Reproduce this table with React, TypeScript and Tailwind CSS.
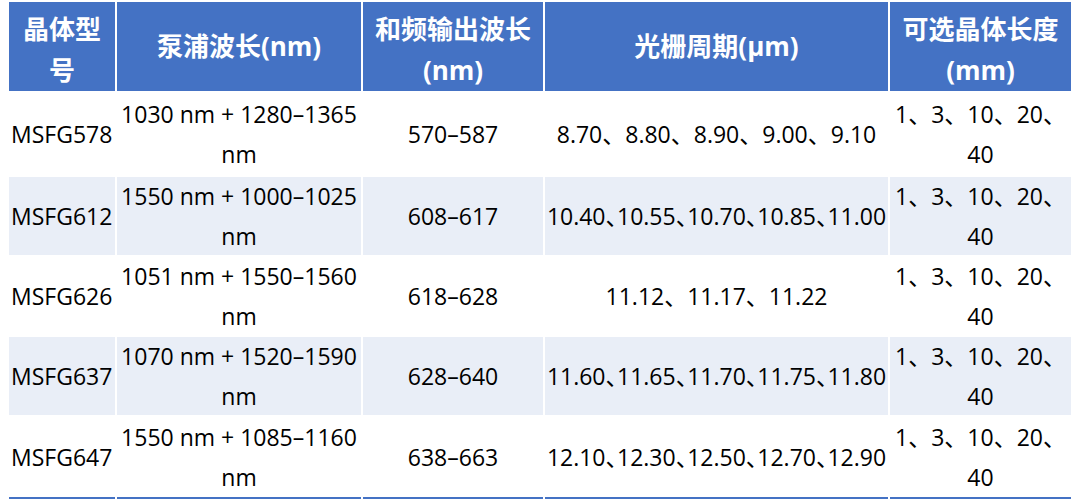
import React from "react";

type Row = {
	model: string;
	pump: string;
	output: string;
	period: string;
	tight: boolean;
	lengths: string;
};

const rows: Row[] = [
	{ model: "MSFG578", pump: "1030 nm + 1280–1365 nm", output: "570–587", period: "8.70、8.80、8.90、9.00、9.10", tight: false, lengths: "1、3、10、20、40" },
	{ model: "MSFG612", pump: "1550 nm + 1000–1025 nm", output: "608–617", period: "10.40、10.55、10.70、10.85、11.00", tight: true, lengths: "1、3、10、20、40" },
	{ model: "MSFG626", pump: "1051 nm + 1550–1560 nm", output: "618–628", period: "11.12、11.17、11.22", tight: false, lengths: "1、3、10、20、40" },
	{ model: "MSFG637", pump: "1070 nm + 1520–1590 nm", output: "628–640", period: "11.60、11.65、11.70、11.75、11.80", tight: true, lengths: "1、3、10、20、40" },
	{ model: "MSFG647", pump: "1550 nm + 1085–1160 nm", output: "638–663", period: "12.10、12.30、12.50、12.70、12.90", tight: true, lengths: "1、3、10、20、40" },
];

// two-line headers sit a little lower in the original
const headers = [
	{ text: "晶体型号", wrap: true },
	{ text: "泵浦波长(nm)", wrap: false },
	{ text: "和频输出波长(nm)", wrap: true },
	{ text: "光栅周期(μm)", wrap: false },
	{ text: "可选晶体长度(mm)", wrap: true },
];

const App: React.FC = () => {
	return (
		<div className="min-h-screen bg-white pt-[2px] pl-[9px] font-['Open_Sans','Noto_Sans_CJK_SC',sans-serif] text-black">
			<div className="grid w-[1062px] grid-cols-[106px_244px_180px_343px_181px] grid-rows-[89px_82px_78px_78px_78px_82px] gap-x-[2px] gap-y-[2px]">
				{headers.map((h) => (
					<div
						key={h.text}
						className={`flex items-center justify-center bg-[#4472C4] px-[3px] text-center text-[26px] font-bold leading-[41px] text-white ${h.wrap ? "pt-[7px]" : ""}`}
					>
						{h.text}
					</div>
				))}

				{rows.map((r, i) => {
					const last = i === rows.length - 1;
					const bg = i % 2 === 1 ? "bg-[#E9EEF7]" : "bg-white";
					const cell = `flex items-center text-[23px] leading-[40px] ${bg} ${last ? "border-b-2 border-[#4472C4]" : ""}`;
					return (
						<React.Fragment key={r.model}>
							<div className={`${cell} justify-start pl-[2px] whitespace-nowrap`}>{r.model}</div>
							<div className={`${cell} justify-center text-center`}>{r.pump}</div>
							<div className={`${cell} justify-center text-center`}>{r.output}</div>
							<div
								className={`${cell} justify-center text-center whitespace-nowrap ${r.tight ? "[font-feature-settings:'halt']" : ""}`}
							>
								{r.period}
							</div>
							<div className={`${cell} justify-center px-[3px] text-center`}>{r.lengths}</div>
						</React.Fragment>
					);
				})}
			</div>
		</div>
	);
};

export default App;
